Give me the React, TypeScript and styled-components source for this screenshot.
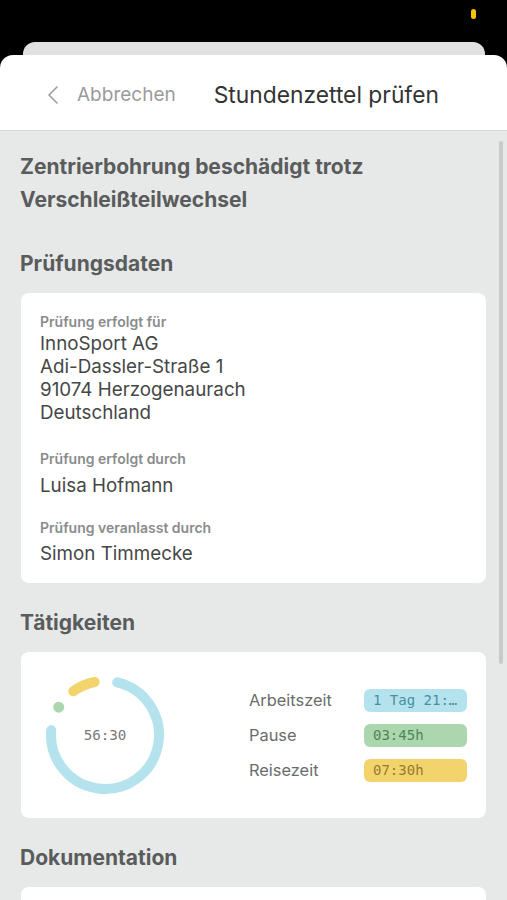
import React from "react";
import styled, { createGlobalStyle } from "styled-components";

const Global = createGlobalStyle`
  html, body { margin: 0; padding: 0; background: #000; }
  body { font-family: Inter, "Noto Sans", sans-serif; -webkit-font-smoothing: antialiased; }
  * { box-sizing: border-box; }
`;

const Screen = styled.div`
  width: 507px;
  height: 900px;
  display: flex;
  flex-direction: column;
  overflow: hidden;
  background: #000;
`;

const StatusBar = styled.div`
  height: 42px;
  display: flex;
  justify-content: flex-end;
  align-items: flex-start;
  padding: 9px 31px 0 0;
`;

const Dot = styled.span`
  width: 5px;
  height: 10px;
  border-radius: 3px;
  background: #f5c400;
`;

const BackSheet = styled.div`
  height: 13px;
  margin: 0 22px 0 23px;
  background: #e1e1e1;
  border-radius: 12px 12px 0 0;
`;

const Sheet = styled.div`
  flex: 1;
  display: flex;
  flex-direction: column;
  background: #fff;
  border-radius: 13px 13px 0 0;
  overflow: hidden;
`;

const Header = styled.header`
  height: 76px;
  flex-shrink: 0;
  display: flex;
  align-items: center;
  padding: 4px 0 0 47px;
  border-bottom: 1px solid #d8dada;
`;

const BackButton = styled.button`
  display: flex;
  align-items: center;
  gap: 18px;
  border: 0;
  background: none;
  padding: 0;
  font: inherit;
  font-size: 19px;
  color: #9b9b9b;
  margin-right: 38px;
`;

const Title = styled.h1`
  margin: 0;
  font-size: 22.8px;
  font-weight: 400;
  color: #333;
`;

const Content = styled.main`
  position: relative;
  flex: 1;
  background: #e7e9e9;
  padding: 19px 21px 0 20px;
  display: flex;
  flex-direction: column;
`;

const ScrollBar = styled.div`
  position: absolute;
  right: 4px;
  top: 10px;
  width: 4px;
  height: 523px;
  border-radius: 2px;
  background: #c8caca;
`;

const PageTitle = styled.h2`
  margin: 0 0 34px;
  font-size: 21px;
  line-height: 33px;
  font-weight: 700;
  color: #5a5c5c;
`;

const Section = styled.section`
  display: flex;
  flex-direction: column;
  margin-bottom: 26px;
`;

const SectionHeading = styled.h3`
  margin: 0 0 15px;
  font-size: 21px;
  line-height: 28px;
  font-weight: 700;
  color: #5a5c5c;
`;

const Card = styled.div`
  background: #fff;
  border-radius: 8px;
  margin-left: 1px;
`;

const InfoCard = styled(Card)`
  display: flex;
  flex-direction: column;
  padding: 21px 19px 18px 19px;
`;

const Field = styled.div<{ $space?: number }>`
  display: flex;
  flex-direction: column;
  margin-top: ${(p) => p.$space ?? 0}px;
`;

const Label = styled.div`
  font-size: 14px;
  line-height: 16px;
  font-weight: 600;
  color: #8a8c8c;
`;

const Value = styled.div<{ $gap: number }>`
  margin-top: ${(p) => p.$gap}px;
  font-size: 18.8px;
  line-height: 23px;
  color: #454747;
`;

const ActivityCard = styled(Card)`
  height: 166px;
  display: flex;
  align-items: center;
  padding: 0 19px 0 24px;
`;

const Donut = styled.div`
  position: relative;
  width: 120px;
  height: 120px;
  flex-shrink: 0;
`;

const DonutLabel = styled.span`
  position: absolute;
  inset: 0;
  display: flex;
  align-items: center;
  justify-content: center;
  font-family: "DejaVu Sans Mono", "Liberation Mono", monospace;
  font-size: 14.2px;
  color: #777979;
`;

const Legend = styled.div`
  margin-left: auto;
  display: grid;
  grid-template-columns: 115px 103px;
  grid-auto-rows: 35px;
  align-items: center;
`;

const LegendLabel = styled.span`
  font-size: 16.4px;
  color: #6a6c6c;
`;

const Pill = styled.span<{ $bg: string; $fg: string }>`
  height: 23px;
  border-radius: 6px;
  background: ${(p) => p.$bg};
  color: ${(p) => p.$fg};
  font-family: "DejaVu Sans Mono", "Liberation Mono", monospace;
  font-size: 14px;
  line-height: 23px;
  padding: 0 9px;
  white-space: nowrap;
  overflow: hidden;
`;

const DocCard = styled(Card)`
  height: 60px;
`;

const R = 54;
const C = 60;
function pt(deg: number) {
  const a = ((deg - 90) * Math.PI) / 180;
  return [C + R * Math.cos(a), C + R * Math.sin(a)];
}
function arc(from: number, to: number) {
  const [x1, y1] = pt(from);
  const [x2, y2] = pt(to);
  const large = to - from > 180 ? 1 : 0;
  return `M ${x1} ${y1} A ${R} ${R} 0 ${large} 1 ${x2} ${y2}`;
}

const [gx, gy] = pt(301);

export default function App() {
  return (
    <>
      <Global />
      <Screen>
        <StatusBar>
          <Dot />
        </StatusBar>
        <BackSheet />
        <Sheet>
          <Header>
            <BackButton>
              <svg width="12" height="20" viewBox="0 0 12 20" fill="none">
                <polyline points="10,2 2,10 10,18" stroke="#9b9b9b" strokeWidth="1.6" strokeLinecap="round" strokeLinejoin="round" />
              </svg>
              Abbrechen
            </BackButton>
            <Title>Stundenzettel prüfen</Title>
          </Header>
          <Content>
            <ScrollBar />
            <PageTitle>
              Zentrierbohrung beschädigt trotz
              <br />
              Verschleißteilwechsel
            </PageTitle>
            <Section>
              <SectionHeading>Prüfungsdaten</SectionHeading>
              <InfoCard>
                <Field>
                  <Label>Prüfung erfolgt für</Label>
                  <Value $gap={2}>
                    InnoSport AG
                    <br />
                    Adi-Dassler-Straße 1
                    <br />
                    91074 Herzogenaurach
                    <br />
                    Deutschland
                  </Value>
                </Field>
                <Field $space={27}>
                  <Label>Prüfung erfolgt durch</Label>
                  <Value $gap={7}>Luisa Hofmann</Value>
                </Field>
                <Field $space={23}>
                  <Label>Prüfung veranlasst durch</Label>
                  <Value $gap={6}>Simon Timmecke</Value>
                </Field>
              </InfoCard>
            </Section>
            <Section>
              <SectionHeading>Tätigkeiten</SectionHeading>
              <ActivityCard>
                <Donut>
                  <svg width="120" height="120" viewBox="0 0 120 120">
                    <path d={arc(13, 275)} stroke="#b4e3ee" strokeWidth="10" fill="none" strokeLinecap="round" />
                    <path d={arc(324, 349)} stroke="#f3d46c" strokeWidth="10" fill="none" strokeLinecap="round" />
                    <circle cx={gx} cy={gy} r="5.5" fill="#acd6ae" />
                  </svg>
                  <DonutLabel>56:30</DonutLabel>
                </Donut>
                <Legend>
                  <LegendLabel>Arbeitszeit</LegendLabel>
                  <Pill $bg="#b4e3ee" $fg="#4b8ea0">1 Tag 21:…</Pill>
                  <LegendLabel>Pause</LegendLabel>
                  <Pill $bg="#acd6ae" $fg="#4e8757">03:45h</Pill>
                  <LegendLabel>Reisezeit</LegendLabel>
                  <Pill $bg="#f3d46c" $fg="#957c2e">07:30h</Pill>
                </Legend>
              </ActivityCard>
            </Section>
            <Section>
              <SectionHeading>Dokumentation</SectionHeading>
              <DocCard />
            </Section>
          </Content>
        </Sheet>
      </Screen>
    </>
  );
}
